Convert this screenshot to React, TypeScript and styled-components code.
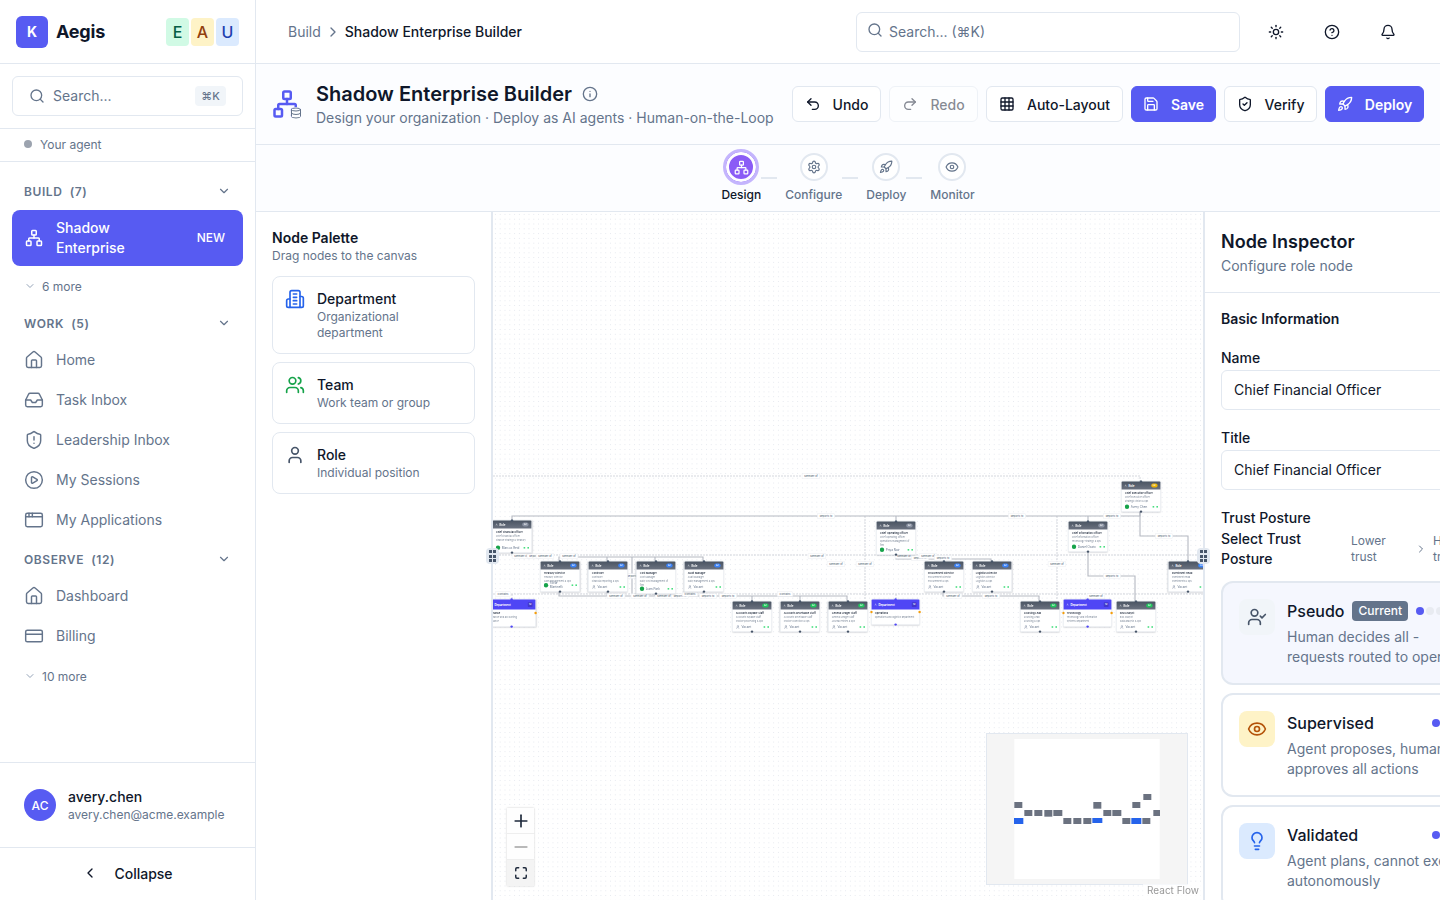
import React from 'react';
import styled, { createGlobalStyle } from 'styled-components';
import {
  AppWindow,
  Bell,
  ChevronDown,
  ChevronLeft,
  ChevronRight,
  CircleHelp,
  CirclePlay,
  CreditCard,
  Database,
  Eye,
  Grid3x3,
  Home,
  Inbox,
  Info,
  Lightbulb,
  Maximize,
  Minus,
  Network,
  Plus,
  Redo2,
  Rocket,
  Save,
  Search,
  Settings,
  ShieldAlert,
  ShieldCheck,
  Sun,
  Undo2,
  User,
  UserCheck,
  Users,
} from 'lucide-react';

const INDIGO = '#575bf2';
const BORDER = '#e2e8f0';
const SLATE = '#64748b';
const INK = '#0f172a';

const GlobalStyle = createGlobalStyle`
  html, body {
    margin: 0;
    height: 100%;
    overflow: hidden;
    background: #fff;
    font-family: Inter, "Liberation Sans", sans-serif;
    color: ${INK};
  }
  #root { height: 100%; }
  * { box-sizing: border-box; }
`;

const Shell = styled.div`
  display: flex;
  width: 1440px;
  height: 900px;
  overflow: hidden;
`;

/* ---------- sidebar ---------- */

const Sidebar = styled.aside`
  width: 256px;
  flex: none;
  display: flex;
  flex-direction: column;
  border-right: 1px solid ${BORDER};
  background: #fff;
`;

const Brand = styled.div`
  height: 64px;
  flex: none;
  display: flex;
  align-items: center;
  padding: 0 16px;
  border-bottom: 1px solid ${BORDER};
`;

const LogoMark = styled.div`
  width: 32px;
  height: 32px;
  border-radius: 6px;
  background: ${INDIGO};
  color: #fff;
  font-size: 14px;
  font-weight: 700;
  display: flex;
  align-items: center;
  justify-content: center;
`;

const BrandName = styled.span`
  margin-left: 8px;
  font-size: 18px;
  font-weight: 700;
  letter-spacing: -0.2px;
  flex: 1;
`;

const ModeBadges = styled.div`
  display: flex;
  gap: 2px;
`;

const ModeBadge = styled.span<{ $bg: string; $fg: string }>`
  width: 23px;
  height: 28px;
  border-radius: 4px;
  background: ${(p) => p.$bg};
  color: ${(p) => p.$fg};
  font-size: 16px;
  font-weight: 500;
  display: flex;
  align-items: center;
  justify-content: center;
`;

const SideSearchWrap = styled.div`
  padding: 12px 12px;
  border-bottom: 1px solid ${BORDER};
  flex: none;
`;

const SideSearch = styled.div`
  height: 40px;
  border: 1px solid ${BORDER};
  border-radius: 6px;
  display: flex;
  align-items: center;
  padding: 0 16px;
  gap: 8px;
  font-size: 14px;
  color: ${SLATE};
  svg { color: ${SLATE}; }
  span:first-of-type { flex: 1; padding-bottom: 2px; }
`;

const Kbd = styled.span`
  width: 31px;
  height: 20px;
  border-radius: 4px;
  background: #f1f5f9;
  font-size: 11px;
  font-weight: 500;
  color: ${SLATE};
  display: flex;
  align-items: center;
  justify-content: center;
`;

const AgentRow = styled.div`
  height: 33px;
  flex: none;
  display: flex;
  align-items: center;
  gap: 8px;
  padding: 0 24px 2px;
  font-size: 12px;
  color: ${SLATE};
  border-bottom: 1px solid ${BORDER};
`;

const GrayDot = styled.span`
  width: 8px;
  height: 8px;
  border-radius: 50%;
  background: #9ca3af;
`;

const SideNav = styled.nav`
  flex: 1;
  display: flex;
  flex-direction: column;
  padding: 10px 12px 0;
`;

const SectionHead = styled.div`
  height: 34px;
  flex: none;
  margin-top: 2px;
  display: flex;
  align-items: center;
  justify-content: space-between;
  padding: 0 12px;
  font-size: 12px;
  font-weight: 600;
  letter-spacing: 0.6px;
  color: ${SLATE};
  white-space: pre;
`;

const ActiveItem = styled.div`
  height: 56px;
  flex: none;
  margin-top: 2px;
  border-radius: 8px;
  background: ${INDIGO};
  color: #fff;
  display: flex;
  align-items: center;
  padding: 0 18px 0 13px;
  font-size: 14px;
  font-weight: 500;
  line-height: 20px;
  gap: 13px;
  span:first-of-type { flex: 1; }
  span:last-of-type { font-size: 12px; }
`;

const MoreRow = styled.div`
  height: 38px;
  flex: none;
  display: flex;
  align-items: center;
  gap: 6px;
  padding: 2px 12px 0;
  font-size: 12px;
  color: ${SLATE};
  svg { color: #94a3b8; }
`;

const NavItem = styled.div`
  height: 40px;
  flex: none;
  display: flex;
  align-items: center;
  gap: 12px;
  padding: 0 12px 1px;
  font-size: 14px;
  color: ${SLATE};
`;

const Account = styled.div`
  height: 85px;
  flex: none;
  display: flex;
  align-items: center;
  gap: 12px;
  padding: 0 24px;
  border-top: 1px solid ${BORDER};
`;

const Avatar = styled.div`
  width: 32px;
  height: 32px;
  border-radius: 50%;
  background: ${INDIGO};
  color: #fff;
  font-size: 12px;
  font-weight: 500;
  display: flex;
  align-items: center;
  justify-content: center;
`;

const AccountText = styled.div`
  padding-top: 2px;
`;

const AccountName = styled.div`
  font-size: 14px;
  font-weight: 500;
  line-height: 18px;
`;

const AccountMail = styled.div`
  font-size: 12px;
  line-height: 18px;
  color: ${SLATE};
`;

const Collapse = styled.div`
  height: 53px;
  flex: none;
  display: flex;
  align-items: center;
  justify-content: center;
  gap: 16px;
  padding-bottom: 2px;
  border-top: 1px solid ${BORDER};
  font-size: 14px;
  font-weight: 500;
`;

/* ---------- top bar ---------- */

const Main = styled.main`
  flex: 1;
  min-width: 0;
  display: flex;
  flex-direction: column;
`;

const TopBar = styled.header`
  height: 64px;
  flex: none;
  display: flex;
  align-items: center;
  padding: 0 34px 0 32px;
  border-bottom: 1px solid ${BORDER};
  background: #fff;
`;

const Crumbs = styled.div`
  flex: 1;
  display: flex;
  align-items: center;
  gap: 4px;
  font-size: 14px;
  color: ${SLATE};
  b { font-weight: 500; color: ${INK}; }
`;

const TopSearch = styled.div`
  width: 384px;
  height: 40px;
  border: 1px solid ${BORDER};
  border-radius: 6px;
  display: flex;
  align-items: flex-start;
  gap: 6px;
  padding: 10px 10px;
  font-size: 14px;
  color: ${SLATE};
  svg { margin-top: -1px; }
`;

const TopIcons = styled.div`
  display: flex;
  gap: 20px;
  margin-left: 18px;
`;

const IconBtn = styled.div`
  width: 36px;
  height: 36px;
  display: flex;
  align-items: center;
  justify-content: center;
`;

/* ---------- page head ---------- */

const PageHead = styled.section`
  height: 81px;
  flex: none;
  display: flex;
  align-items: center;
  padding: 0 16px;
  background: #fcfdff;
  border-bottom: 1px solid ${BORDER};
`;

const HeadIcon = styled.div`
  position: relative;
  width: 30px;
  height: 30px;
  color: ${INDIGO};
  margin-right: 14px;
  svg.sub {
    position: absolute;
    right: 0;
    bottom: 0;
    color: ${SLATE};
    background: #fcfdff;
    border-radius: 50%;
  }
`;

const HeadText = styled.div`
  flex: 1;
`;

const Title = styled.h1`
  margin: 0;
  display: flex;
  align-items: center;
  gap: 10px;
  font-size: 20px;
  line-height: 28px;
  font-weight: 600;
  svg { color: ${SLATE}; }
`;

const Sub = styled.p`
  margin: 0;
  font-size: 14px;
  line-height: 20px;
  color: ${SLATE};
`;

const Actions = styled.div`
  display: flex;
  gap: 8px;
`;

const ActionBtn = styled.button<{ $w: number; $primary?: boolean; $off?: boolean }>`
  width: ${(p) => p.$w}px;
  height: 36px;
  border-radius: 6px;
  border: 1px solid ${(p) => (p.$primary ? INDIGO : BORDER)};
  background: ${(p) => (p.$primary ? INDIGO : '#fff')};
  color: ${(p) => (p.$primary ? '#fff' : INK)};
  opacity: ${(p) => (p.$off ? 0.5 : 1)};
  font: ${(p) => (p.$primary ? 600 : 500)} 14px Inter, sans-serif;
  display: flex;
  align-items: center;
  justify-content: center;
  gap: 12px;
  padding: 0;
`;

/* ---------- stepper ---------- */

const Stepper = styled.section`
  height: 67px;
  flex: none;
  display: flex;
  justify-content: center;
  padding-top: 4px;
  background: #fcfdff;
  border-bottom: 1px solid ${BORDER};
`;

const Step = styled.div<{ $active?: boolean }>`
  display: flex;
  flex-direction: column;
  align-items: center;
  font-size: 12px;
  font-weight: 500;
  color: ${(p) => (p.$active ? INK : SLATE)};
`;

const StepDisc = styled.div<{ $active?: boolean }>`
  width: ${(p) => (p.$active ? 36 : 28)}px;
  height: ${(p) => (p.$active ? 36 : 28)}px;
  margin: ${(p) => (p.$active ? '0 0 2px' : '4px 0 6px')};
  border-radius: 50%;
  display: flex;
  align-items: center;
  justify-content: center;
  color: ${(p) => (p.$active ? '#fff' : SLATE)};
  background: ${(p) => (p.$active ? '#8b5cf6' : '#fff')};
  border: ${(p) => (p.$active ? '3px solid #c4b5fd' : `2px solid ${BORDER}`)};
  box-shadow: ${(p) => (p.$active ? 'inset 0 0 0 3px #fff' : 'none')};
`;

const StepLine = styled.div`
  width: 16px;
  height: 2px;
  margin: 28px 8px 0 0;
  background: ${BORDER};
`;

/* ---------- workspace ---------- */

const Workspace = styled.div`
  flex: 1;
  min-height: 0;
  display: flex;
`;

const Palette = styled.aside`
  width: 235px;
  flex: none;
  padding: 16px;
  background: #fff;
`;

const PaletteTitle = styled.div`
  font-size: 14px;
  font-weight: 600;
  line-height: 20px;
`;

const PaletteSub = styled.div`
  font-size: 12px;
  line-height: 16px;
  color: ${SLATE};
  margin-bottom: 12px;
`;

const PaletteCard = styled.div<{ $tone: string }>`
  width: 203px;
  border: 1px solid ${BORDER};
  border-radius: 8px;
  padding: 12px;
  margin-bottom: 8px;
  display: flex;
  gap: 12px;
  background: #fff;
  svg { color: ${(p) => p.$tone}; flex: none; }
`;

const PaletteName = styled.div`
  font-size: 14px;
  font-weight: 500;
  line-height: 20px;
`;

const PaletteDesc = styled.div`
  font-size: 12px;
  line-height: 16px;
  color: ${SLATE};
`;

const Divider = styled.div`
  position: relative;
  width: 2px;
  flex: none;
  background: ${BORDER};
  z-index: 5;
`;

const Grip = styled.div<{ $offset: number }>`
  position: absolute;
  left: ${(p) => p.$offset}px;
  top: 50%;
  width: 13px;
  height: 16px;
  margin-top: -8px;
  border-radius: 4px;
  background: ${BORDER};
  display: grid;
  grid-template-columns: 3px 3px;
  gap: 1.5px;
  align-content: center;
  justify-content: center;
  i { width: 3px; height: 3px; background: #475569; }
`;

const Canvas = styled.div`
  position: relative;
  flex: 1;
  min-width: 0;
  overflow: hidden;
  background-color: #fff;
  background-image: radial-gradient(#e6e9ef 0.6px, transparent 0.7px);
  background-size: 4.8px 4.8px;
`;

const EdgeLayer = styled.svg`
  position: absolute;
  left: 0;
  top: 0;
  width: 710px;
  height: 688px;
`;

const Viewport = styled.div`
  position: absolute;
  left: 0;
  top: 0;
  width: 3550px;
  height: 3440px;
  transform: scale(0.2);
  transform-origin: 0 0;
`;

const FlowNode = styled.div.attrs<{ $x: number; $y: number; $w: number; $h: number }>((p) => ({
  style: { left: (p.$x - 493) * 5, top: (p.$y - 212) * 5, width: p.$w * 5, height: p.$h * 5 },
}))<{ $x: number; $y: number; $w: number; $h: number }>`
  position: absolute;
  background: #fff;
  border: 3px solid #dde2ea;
  border-radius: 8px;
  box-shadow: 0 2px 6px rgba(15, 23, 42, 0.12);
`;

const NodeHead = styled.div<{ $dept?: boolean }>`
  height: ${(p) => (p.$dept ? 50 : 40)}px;
  display: flex;
  align-items: center;
  gap: 8px;
  padding: 0 14px;
  color: #fff;
  font-size: 14px;
  font-weight: 700;
  border-radius: 5px 5px 0 0;
  background: ${(p) => (p.$dept ? '#4f46f5' : 'linear-gradient(180deg, #4b5563, #6b7280)')};
  span { flex: 1; }
`;

const Level = styled.em<{ $tone: string; $square?: boolean }>`
  width: ${(p) => (p.$square ? 24 : 32)}px;
  height: ${(p) => (p.$square ? 24 : 20)}px;
  border-radius: ${(p) => (p.$square ? 4 : 10)}px;
  background: ${(p) => p.$tone};
  font-style: normal;
  font-size: 11px;
  text-align: center;
  line-height: ${(p) => (p.$square ? 24 : 20)}px;
`;

const NodeBody = styled.div`
  padding: 7px 16px 0;
  font-size: 11.5px;
  line-height: 20px;
  color: #7b8798;
  white-space: nowrap;
  overflow: hidden;
  b { display: block; font-size: 12.5px; font-weight: 600; color: #1e293b; line-height: 20px; }
`;

const NodeFoot = styled.div`
  position: absolute;
  left: 16px;
  right: 12px;
  bottom: 12px;
  display: flex;
  align-items: center;
  gap: 8px;
  font-size: 15px;
  color: ${SLATE};
  span { flex: 1; }
  i {
    width: 8px;
    height: 8px;
    margin-left: 3px;
    background: #4ade80;
  }
  u {
    width: 22px;
    height: 22px;
    border-radius: 50%;
    background: #16a34a;
  }
`;

const Handle = styled.div<{ $side: 'top' | 'bottom' | 'left' | 'right'; $tone: string }>`
  position: absolute;
  width: 12px;
  height: 12px;
  border-radius: 50%;
  background: ${(p) => p.$tone};
  ${(p) =>
    p.$side === 'top' || p.$side === 'bottom'
      ? `left: 50%; margin-left: -6px; ${p.$side}: -7px;`
      : `top: 50%; margin-top: -6px; ${p.$side}: -7px;`}
`;

const EdgeTag = styled.div.attrs<{ $x: number; $y: number }>((p) => ({
  style: { left: (p.$x - 493) * 5, top: (p.$y - 212) * 5 },
}))<{ $x: number; $y: number }>`
  position: absolute;
  transform: translate(-50%, -50%);
  height: 24px;
  line-height: 20px;
  padding: 0 10px;
  background: #fff;
  border: 2px solid #e5e8ee;
  font-size: 13px;
  color: #475569;
  white-space: nowrap;
`;

const Controls = styled.div`
  position: absolute;
  left: 14px;
  bottom: 14px;
  width: 27px;
  box-shadow: 0 0 2px rgba(0, 0, 0, 0.2);
  background: #fff;
`;

const ControlBtn = styled.div<{ $hover?: boolean; $off?: boolean }>`
  height: 26px;
  display: flex;
  align-items: center;
  justify-content: center;
  border-bottom: 1px solid #eee;
  background: ${(p) => (p.$hover ? '#f4f4f4' : '#fefefe')};
  color: ${(p) => (p.$off ? '#a3a3a3' : '#1e293b')};
  &:last-child { border-bottom: 0; }
`;

const MiniMap = styled.div`
  position: absolute;
  right: 15px;
  bottom: 15px;
  width: 202px;
  height: 152px;
  border: 1px solid ${BORDER};
  background: #f5f5f5;
  display: flex;
  align-items: center;
  justify-content: center;
`;

const Attribution = styled.div`
  position: absolute;
  right: 0;
  bottom: 4px;
  padding: 0 4px;
  font-size: 10px;
  line-height: 12px;
  color: #999;
  background: rgba(255, 255, 255, 0.7);
`;

/* ---------- inspector ---------- */

const Inspector = styled.aside`
  width: 235px;
  flex: none;
  overflow: hidden;
  background: #fff;
`;

const InspectorInner = styled.div`
  width: 320px;
`;

const InspectorHead = styled.div`
  height: 81px;
  padding: 16px 16px 0;
  border-bottom: 1px solid ${BORDER};
  h2 { margin: 0; font-size: 18px; line-height: 28px; font-weight: 600; }
  p { margin: 0; font-size: 14px; line-height: 20px; color: ${SLATE}; }
`;

const InspectorBody = styled.div`
  padding: 16px;
`;

const SectionTitle = styled.div`
  font-size: 14px;
  font-weight: 600;
  line-height: 20px;
  margin-bottom: 19px;
`;

const FieldLabel = styled.label`
  display: block;
  font-size: 14px;
  font-weight: 500;
  line-height: 20px;
  margin-bottom: 2px;
`;

const FieldInput = styled.div`
  height: 40px;
  border: 1px solid ${BORDER};
  border-radius: 6px;
  padding: 0 12px;
  font-size: 14px;
  line-height: 38px;
  margin-bottom: 18px;
`;

const TrustLabel = styled(FieldLabel)`
  margin: 1px 0;
`;

const PostureHead = styled.div`
  display: flex;
  align-items: center;
  margin-bottom: 12px;
`;

const PostureLabel = styled.div`
  width: 130px;
  font-size: 14px;
  font-weight: 500;
  line-height: 20px;
`;

const TrustHint = styled.div`
  width: 44px;
  font-size: 12px;
  line-height: 16px;
  color: ${SLATE};
`;

const TrustArrow = styled.div`
  width: 38px;
  display: flex;
  justify-content: flex-end;
  padding-right: 6px;
  color: ${SLATE};
`;

const PostureCard = styled.div<{ $current?: boolean }>`
  width: 288px;
  height: 104px;
  margin-bottom: 8px;
  border: 2px solid ${BORDER};
  border-radius: 12px;
  padding: 16px;
  display: flex;
  gap: 12px;
  background: ${(p) => (p.$current ? '#f5f7fe' : '#fff')};
`;

const PostureIcon = styled.div<{ $bg: string; $fg: string }>`
  width: 36px;
  height: 36px;
  flex: none;
  border-radius: 8px;
  background: ${(p) => p.$bg};
  color: ${(p) => p.$fg};
  display: flex;
  align-items: center;
  justify-content: center;
`;

const PostureRow = styled.div`
  width: 173px;
  height: 24px;
  display: flex;
  align-items: center;
  gap: 8px;
  font-size: 16px;
  font-weight: 500;
  white-space: nowrap;
`;

const CurrentTag = styled.span`
  height: 20px;
  padding: 0 6px;
  border-radius: 4px;
  background: ${SLATE};
  color: #fff;
  font-size: 12px;
  line-height: 20px;
`;

const LevelDots = styled.div<{ $current?: boolean }>`
  margin-left: ${(p) => (p.$current ? '0' : 'auto')};
  display: flex;
  gap: 2px;
  i { width: 8px; height: 8px; border-radius: 50%; background: #e8ebf1; }
  i:first-child { background: ${INDIGO}; }
`;

const PostureDesc = styled.div`
  width: 200px;
  margin-top: 4px;
  font-size: 14px;
  line-height: 20px;
  color: ${SLATE};
  white-space: nowrap;
`;

/* ---------- data ---------- */

type NodeData = {
  x: number;
  y: number;
  w?: number;
  h: number;
  name: string;
  lines?: string[];
  person?: string;
  tone?: string;
  dept?: boolean;
};

const GRAY = '#8b93a3';
const BLUE = '#3b82f6';
const GREEN = '#22c55e';

const nodes: NodeData[] = [
  { x: 1121, y: 481, h: 31, name: 'Chief Executive Officer', lines: ['Chief Executive Officer', 'Strategic vision & ops'], person: 'Avery Chen', tone: '#eab308' },
  { x: 492, y: 520, h: 33, name: 'Chief Financial Officer', lines: ['Chief Financial Officer', 'Finance strategy & treasury'], person: 'Marcus Reid', tone: GRAY },
  { x: 876, y: 521, h: 34, name: 'Chief Operating Officer', lines: ['Chief Operating Officer', 'Operations management of', 'firm'], person: 'Priya Nair', tone: GRAY },
  { x: 1068, y: 521, h: 31, name: 'Chief Information Officer', lines: ['Chief Information Officer', 'Technology strategy & ops'], person: 'Daniel Osato', tone: GRAY },
  { x: 540, y: 561, h: 31, name: 'Treasury Director', lines: ['Treasury Director', 'Cash management & ops'], person: 'Sofia Martinelli', tone: BLUE },
  { x: 588, y: 561, h: 31, name: 'Controller', lines: ['Controller', 'Financial reporting & ops'], person: 'Vacant', tone: BLUE },
  { x: 636, y: 561, h: 33, name: 'Cost Manager', lines: ['Cost Manager', 'Daily cost management of', 'firm'], person: 'Liam Park', tone: BLUE },
  { x: 684, y: 561, h: 31, name: 'Audit Manager', lines: ['Audit Manager', 'Daily management & ops'], person: 'Vacant', tone: BLUE },
  { x: 924, y: 561, h: 31, name: 'Procurement Director', lines: ['Procurement Director', 'Procurement & ops'], person: 'Vacant', tone: BLUE },
  { x: 972, y: 561, h: 31, name: 'Logistics Director', lines: ['Logistics Director', 'Logistics & ops'], person: 'Vacant', tone: BLUE },
  { x: 1168, y: 561, h: 31, name: 'Investment Head', lines: ['Investment Head', 'Investments & ops'], person: 'Vacant', tone: BLUE },
  { x: 732, y: 601, h: 31, name: 'Accounts Payable Staff', lines: ['Accounts Payable Staff', 'Invoice processing & ops'], person: 'Vacant', tone: GREEN },
  { x: 780, y: 601, h: 31, name: 'Accounts Receivable Staff', lines: ['Accounts Receivable Staff', 'Invoice collection & ops'], person: 'Vacant', tone: GREEN },
  { x: 828, y: 601, h: 31, name: 'General Ledger Staff', lines: ['General Ledger Staff', 'Journal entries & ops'], person: 'Vacant', tone: GREEN },
  { x: 1020, y: 601, h: 31, name: 'Sourcing Lead', lines: ['Sourcing Lead', 'Sourcing & ops'], person: 'Vacant', tone: GREEN },
  { x: 1116, y: 601, h: 31, name: 'BIM Analyst', lines: ['BIM Analyst', 'Data analysis & ops'], person: 'Vacant', tone: GREEN },
  { x: 487, y: 599, w: 49, h: 28, name: 'Finance', lines: ['Finance and accounting', 'finance'], dept: true },
  { x: 871, y: 599, w: 49, h: 26, name: 'Operations', lines: ['Operations and logistics department'], dept: true },
  { x: 1063, y: 599, w: 49, h: 28, name: 'Technology', lines: ['Technology and information', 'systems department'], dept: true },
];

const solidEdges = [
  '512,520 512,516 1140,516 1140,512',
  '559,561 559,557 703,557 703,561',
  '607,557 607,561',
  '655,557 655,561',
  '632,557 632,596',
  '559,592 559,596 847,596 847,601',
  '607,592 607,596',
  '655,594 655,596',
  '703,592 703,596',
  '752,596 752,601',
  '800,596 800,601',
  '896,516 896,521',
  '1088,516 1088,521',
  '896,555 896,559 991,559 991,561',
  '943,559 943,561',
  '943,592 943,596 1039,596 1039,601',
  '1140,512 1140,536 1188,536 1188,561',
  '1088,552 1088,576 1135,576 1135,601',
];

const dashedEdges = [
  '493,476 1140,476 1140,481',
  '493,555 1204,555',
  '493,594 1204,594',
  '865,516 865,599',
  '1057,516 1057,599',
  '512,594 512,599',
  '896,594 896,599',
  '1088,594 1088,599',
];

const edgeTags: [number, number, string][] = [
  [811, 476, 'Member of'],
  [826, 516, 'Reports to'],
  [1017, 516, 'Reports to'],
  [1112, 516, 'Reports to'],
  [1164, 536, 'Reports to'],
  [521, 556, 'Member of'],
  [534, 556, 'Reports'],
  [545, 556, 'Member of'],
  [569, 556, 'Member of'],
  [632, 576, 'Reports'],
  [817, 556, 'Member of'],
  [836, 564, 'Member of'],
  [865, 564, 'Member of'],
  [1057, 564, 'Member of'],
  [904, 556, 'Member of'],
  [920, 558, 'Reports to'],
  [928, 556, 'Member of'],
  [943, 558, 'Reports to'],
  [1112, 576, 'Reports to'],
  [503, 594, 'Contains'],
  [616, 596, 'Member of'],
  [640, 596, 'Member of'],
  [664, 596, 'Member of'],
  [680, 596, 'Reports to'],
  [690, 594, 'Contains'],
  [708, 596, 'Reports to'],
  [728, 596, 'Reports to'],
  [785, 594, 'Contains'],
  [953, 596, 'Member of'],
  [991, 596, 'Reports to'],
  [1096, 596, 'Member of'],
];

const miniGray = [
  [102, 246, 24, 18], [132, 270, 24, 18], [162, 270, 24, 18], [192, 270, 24, 20],
  [219, 270, 27, 18], [249, 294, 24, 18], [279, 294, 24, 18], [309, 294, 24, 18],
  [339, 246, 24, 20], [369, 270, 24, 18], [396, 270, 27, 18], [426, 294, 24, 18],
  [456, 246, 24, 18], [489, 222, 24, 18], [486, 294, 24, 18], [519, 270, 24, 18],
];

const miniBlue = [
  [100, 294, 29, 18], [336, 294, 30, 15], [453, 294, 30, 18],
];

const workItems = [
  { icon: Home, label: 'Home' },
  { icon: Inbox, label: 'Task Inbox' },
  { icon: ShieldAlert, label: 'Leadership Inbox' },
  { icon: CirclePlay, label: 'My Sessions' },
  { icon: AppWindow, label: 'My Applications' },
];

const observeItems = [
  { icon: Home, label: 'Dashboard' },
  { icon: CreditCard, label: 'Billing' },
];

const TowerIcon = () => (
  <svg width={20} height={20} viewBox='0 0 24 24' fill='none' stroke='currentColor' strokeWidth={2} strokeLinecap='round' strokeLinejoin='round'>
    <path d='M6 22V4a2 2 0 0 1 2-2h8a2 2 0 0 1 2 2v18Z' />
    <path d='M6 12H4a2 2 0 0 0-2 2v6a2 2 0 0 0 2 2h2' />
    <path d='M18 9h2a2 2 0 0 1 2 2v9a2 2 0 0 1-2 2h-2' />
    <path d='M10 6h4M10 10h4M10 14h4M10 18h4' />
  </svg>
);

const NavSection = ({ title, items }: { title: string; items: typeof workItems }) => (
  <>
    <SectionHead>
      <span>{title}</span>
      <ChevronDown size={14} />
    </SectionHead>
    {items.map(({ icon: Icon, label }) => (
      <NavItem key={label}>
        <Icon size={20} strokeWidth={1.75} />
        {label}
      </NavItem>
    ))}
  </>
);

const SideBar = () => (
  <Sidebar>
    <Brand>
      <LogoMark>K</LogoMark>
      <BrandName>Aegis</BrandName>
      <ModeBadges>
        <ModeBadge $bg='#d1fae5' $fg='#065f46'>E</ModeBadge>
        <ModeBadge $bg='#fef3c7' $fg='#92400e'>A</ModeBadge>
        <ModeBadge $bg='#dbeafe' $fg='#1e40af'>U</ModeBadge>
      </ModeBadges>
    </Brand>
    <SideSearchWrap>
      <SideSearch>
        <Search size={16} />
        <span>Search...</span>
        <Kbd>⌘K</Kbd>
      </SideSearch>
    </SideSearchWrap>
    <AgentRow>
      <GrayDot />
      Your agent
    </AgentRow>
    <SideNav>
      <SectionHead>
        <span>BUILD  (7)</span>
        <ChevronDown size={14} />
      </SectionHead>
      <ActiveItem>
        <Network size={18} />
        <span>Shadow<br />Enterprise</span>
        <span>NEW</span>
      </ActiveItem>
      <MoreRow>
        <ChevronDown size={12} />
        6 more
      </MoreRow>
      <NavSection title='WORK  (5)' items={workItems} />
      <NavSection title='OBSERVE  (12)' items={observeItems} />
      <MoreRow>
        <ChevronDown size={12} />
        10 more
      </MoreRow>
    </SideNav>
    <Account>
      <Avatar>AC</Avatar>
      <AccountText>
        <AccountName>avery.chen</AccountName>
        <AccountMail>avery.chen@acme.example</AccountMail>
      </AccountText>
    </Account>
    <Collapse>
      <ChevronLeft size={16} />
      Collapse
    </Collapse>
  </Sidebar>
);

const FlowCanvas = () => (
  <Canvas>
    <EdgeLayer viewBox='493 212 710 688'>
      {dashedEdges.map((p) => (
        <polyline key={p} points={p} fill='none' stroke='#c9cdd4' strokeWidth={0.8} strokeDasharray='2 1' />
      ))}
      {solidEdges.map((p) => (
        <polyline key={p} points={p} fill='none' stroke='#b5b9c2' strokeWidth={1.1} />
      ))}
    </EdgeLayer>
    <Viewport>
      {edgeTags.map(([x, y, text]) => (
        <EdgeTag key={`${x}-${y}`} $x={x} $y={y}>{text}</EdgeTag>
      ))}
      {nodes.map((n) => (
        <FlowNode key={n.name} $x={n.x} $y={n.y} $w={n.w ?? 40} $h={n.h}>
          <Handle $side='top' $tone={n.dept ? '#4f46f5' : '#475569'} />
          <NodeHead $dept={n.dept}>
            <Users size={12} />
            <span>{n.dept ? 'Department' : 'Role'}</span>
            {n.tone && <Level $tone={n.tone}>L2</Level>}
            {n.dept && <Level $square $tone='#4338ca'>12</Level>}
          </NodeHead>
          <NodeBody>
            <b>{n.name}</b>
            {n.lines?.map((l) => <div key={l}>{l}</div>)}
          </NodeBody>
          {n.person && (
            <NodeFoot>
              {n.person === 'Vacant' ? <User size={20} /> : <u />}
              <span>{n.person}</span>
              <i />
              <i />
            </NodeFoot>
          )}
          {n.dept && <Handle $side='left' $tone='#f59e0b' />}
          {n.dept && <Handle $side='right' $tone='#f59e0b' />}
          <Handle $side='bottom' $tone={n.dept ? '#4f46f5' : '#475569'} />
        </FlowNode>
      ))}
    </Viewport>
    <Controls>
      <ControlBtn><Plus size={20} /></ControlBtn>
      <ControlBtn $off><Minus size={20} /></ControlBtn>
      <ControlBtn $hover><Maximize size={14} strokeWidth={2.5} /></ControlBtn>
    </Controls>
    <MiniMap>
      <svg width={146} height={140} viewBox='102 57 436 420'>
        <rect x={102} y={57} width={436} height={420} fill='#fff' />
        {miniGray.map(([x, y, w, h]) => (
          <rect key={`${x}-${y}`} x={x} y={y} width={w} height={h} fill='#6b7280' />
        ))}
        {miniBlue.map(([x, y, w, h]) => (
          <rect key={`${x}-${y}`} x={x} y={y} width={w} height={h} fill='#2563eb' />
        ))}
      </svg>
    </MiniMap>
    <Attribution>React Flow</Attribution>
  </Canvas>
);

const Posture = ({
  name,
  desc,
  icon,
  bg,
  fg,
  current,
}: {
  name: string;
  desc: string[];
  icon: React.ReactNode;
  bg: string;
  fg: string;
  current?: boolean;
}) => (
  <PostureCard $current={current}>
    <PostureIcon $bg={bg} $fg={fg}>{icon}</PostureIcon>
    <div>
      <PostureRow>
        {name}
        {current && <CurrentTag>Current</CurrentTag>}
        <LevelDots $current={current}>
          <i /><i /><i />
        </LevelDots>
      </PostureRow>
      <PostureDesc>{desc[0]}<br />{desc[1]}</PostureDesc>
    </div>
  </PostureCard>
);

const NodeInspector = () => (
  <Inspector>
    <InspectorInner>
      <InspectorHead>
        <h2>Node Inspector</h2>
        <p>Configure role node</p>
      </InspectorHead>
      <InspectorBody>
        <SectionTitle>Basic Information</SectionTitle>
        <FieldLabel>Name</FieldLabel>
        <FieldInput>Chief Financial Officer</FieldInput>
        <FieldLabel>Title</FieldLabel>
        <FieldInput>Chief Financial Officer</FieldInput>
        <TrustLabel>Trust Posture</TrustLabel>
        <PostureHead>
          <PostureLabel>Select Trust<br />Posture</PostureLabel>
          <TrustHint>Lower trust</TrustHint>
          <TrustArrow><ChevronRight size={12} /></TrustArrow>
          <TrustHint>Higher trust</TrustHint>
        </PostureHead>
        <Posture
          current
          name='Pseudo'
          desc={['Human decides all -', 'requests routed to operators']}
          icon={<UserCheck size={20} />}
          bg='#f1f5f9'
          fg='#475569'
        />
        <Posture
          name='Supervised'
          desc={['Agent proposes, human', 'approves all actions']}
          icon={<Eye size={20} />}
          bg='#fef3c7'
          fg='#b45309'
        />
        <Posture
          name='Validated'
          desc={['Agent plans, cannot execute', 'autonomously']}
          icon={<Lightbulb size={20} />}
          bg='#dbeafe'
          fg='#2563eb'
        />
      </InspectorBody>
    </InspectorInner>
  </Inspector>
);

export default function App() {
  return (
    <Shell>
      <GlobalStyle />
      <SideBar />
      <Main>
        <TopBar>
          <Crumbs>
            Build
            <ChevronRight size={16} />
            <b>Shadow Enterprise Builder</b>
          </Crumbs>
          <TopSearch>
            <Search size={16} />
            Search... (⌘K)
          </TopSearch>
          <TopIcons>
            <IconBtn><Sun size={16} /></IconBtn>
            <IconBtn><CircleHelp size={16} /></IconBtn>
            <IconBtn><Bell size={16} /></IconBtn>
          </TopIcons>
        </TopBar>
        <PageHead>
          <HeadIcon>
            <Network size={30} />
            <Database className='sub' size={12} />
          </HeadIcon>
          <HeadText>
            <Title>
              Shadow Enterprise Builder
              <Info size={16} />
            </Title>
            <Sub>Design your organization · Deploy as AI agents · Human-on-the-Loop</Sub>
          </HeadText>
          <Actions>
            <ActionBtn $w={89}><Undo2 size={16} />Undo</ActionBtn>
            <ActionBtn $w={89} $off><Redo2 size={16} />Redo</ActionBtn>
            <ActionBtn $w={137}><Grid3x3 size={16} />Auto-Layout</ActionBtn>
            <ActionBtn $w={85} $primary><Save size={16} />Save</ActionBtn>
            <ActionBtn $w={93}><ShieldCheck size={16} />Verify</ActionBtn>
            <ActionBtn $w={99} $primary><Rocket size={16} />Deploy</ActionBtn>
          </Actions>
        </PageHead>
        <Stepper>
          <Step $active>
            <StepDisc $active><Network size={15} /></StepDisc>
            Design
          </Step>
          <StepLine />
          <Step>
            <StepDisc><Settings size={14} /></StepDisc>
            Configure
          </Step>
          <StepLine />
          <Step>
            <StepDisc><Rocket size={14} /></StepDisc>
            Deploy
          </Step>
          <StepLine />
          <Step>
            <StepDisc><Eye size={14} /></StepDisc>
            Monitor
          </Step>
        </Stepper>
        <Workspace>
          <Palette>
            <PaletteTitle>Node Palette</PaletteTitle>
            <PaletteSub>Drag nodes to the canvas</PaletteSub>
            <PaletteCard $tone='#2563eb'>
              <TowerIcon />
              <div>
                <PaletteName>Department</PaletteName>
                <PaletteDesc>Organizational department</PaletteDesc>
              </div>
            </PaletteCard>
            <PaletteCard $tone='#16a34a'>
              <Users size={20} />
              <div>
                <PaletteName>Team</PaletteName>
                <PaletteDesc>Work team or group</PaletteDesc>
              </div>
            </PaletteCard>
            <PaletteCard $tone='#475569'>
              <User size={20} />
              <div>
                <PaletteName>Role</PaletteName>
                <PaletteDesc>Individual position</PaletteDesc>
              </div>
            </PaletteCard>
          </Palette>
          <Divider>
            <Grip $offset={-5}><i /><i /><i /><i /><i /><i /></Grip>
          </Divider>
          <FlowCanvas />
          <Divider>
            <Grip $offset={-6}><i /><i /><i /><i /><i /><i /></Grip>
          </Divider>
          <NodeInspector />
        </Workspace>
      </Main>
    </Shell>
  );
}
